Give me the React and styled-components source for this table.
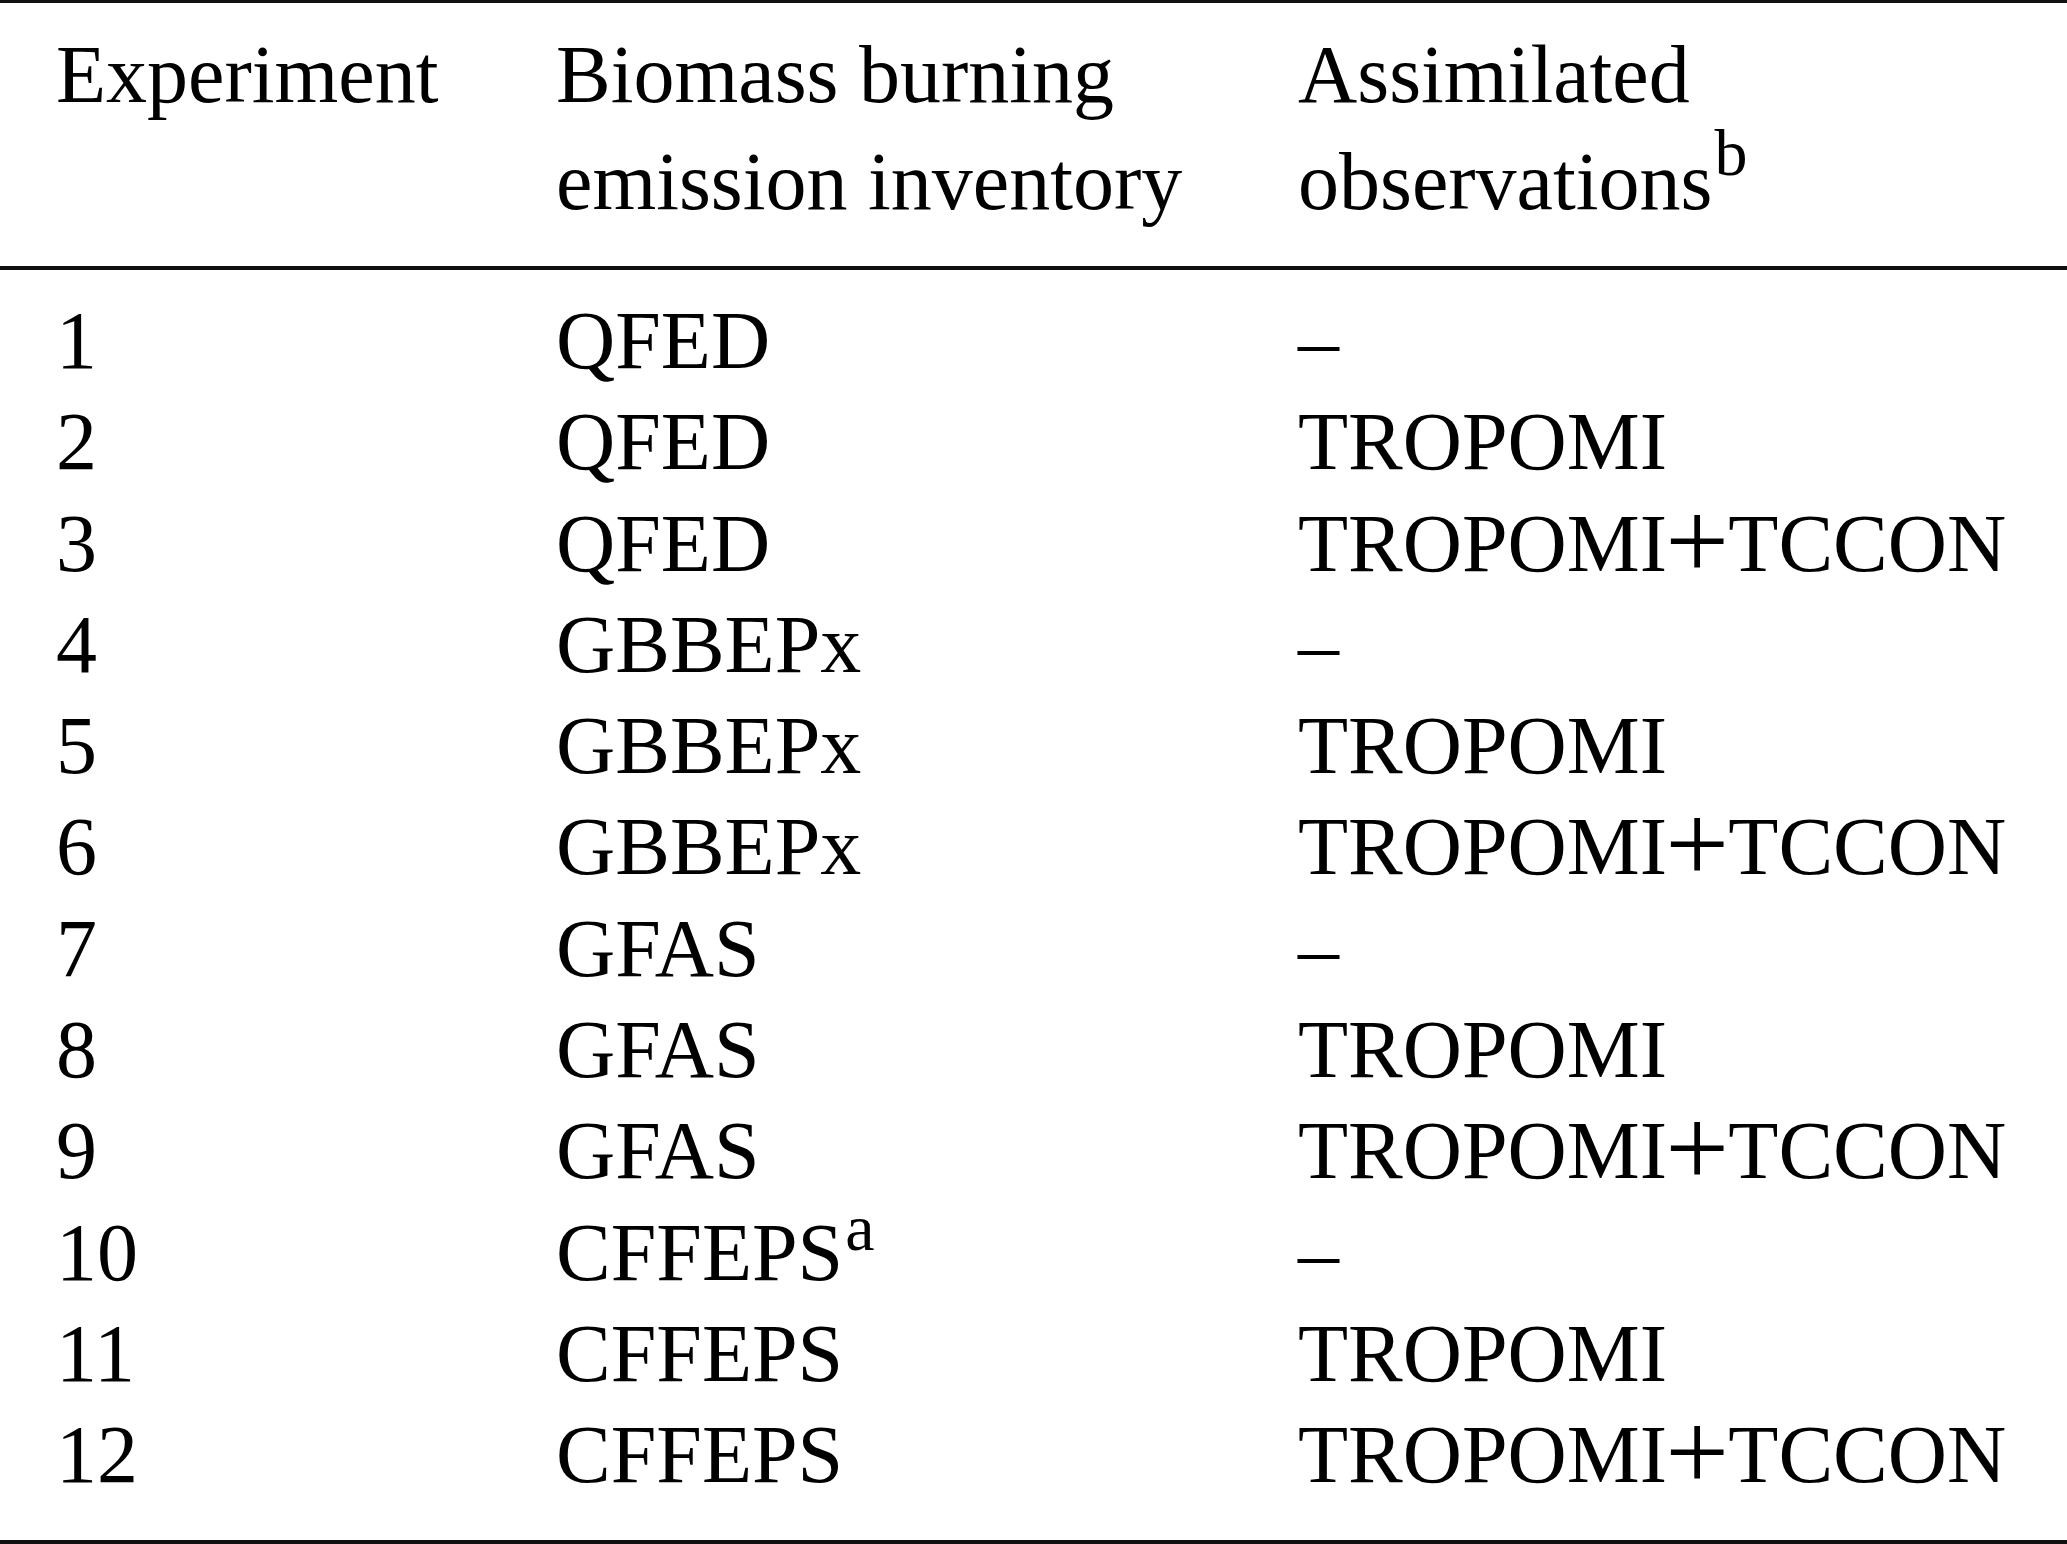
import React from "react";
import styled, { createGlobalStyle } from "styled-components";

const GlobalStyle = createGlobalStyle`
  html, body {
    margin: 0;
    padding: 0;
    background: #ffffff;
  }
  body {
    font-family: "Liberation Serif", "Times New Roman", serif;
    color: #000;
  }
`;

const Table = styled.div`
  width: 2067px;
  height: 1544px;
  box-sizing: border-box;
  border-top: 3px solid #111;
  border-bottom: 4px solid #111;
  display: flex;
  flex-direction: column;
`;

const Head = styled.div`
  display: grid;
  grid-template-columns: 500px 742px 1fr;
  padding: 18px 0 31px 56px;
  border-bottom: 4px solid #111;
  font-size: 82px;
  line-height: 107px;
`;

const Body = styled.div`
  display: grid;
  grid-template-columns: 500px 742px 1fr;
  grid-auto-rows: 101.3px;
  padding: 20px 0 0 56px;
  font-size: 82px;
  line-height: 101.3px;
`;

const Cell = styled.div`
  white-space: nowrap;
`;

const Sup = styled.sup`
  font-size: 66px;
  line-height: 0;
  vertical-align: ${(p) => (p.$high ? "34px" : "30px")};
  margin-left: 2px;
`;

const Plus = styled.span`
  display: inline-block;
  line-height: 82px;
  margin: 0 8px 0 7px;
  transform: scale(1.38);
  transform-origin: 50% 48px;
`;

const rows = [
  ["1", "QFED", "–"],
  ["2", "QFED", "TROPOMI"],
  ["3", "QFED", "TROPOMI+TCCON"],
  ["4", "GBBEPx", "–"],
  ["5", "GBBEPx", "TROPOMI"],
  ["6", "GBBEPx", "TROPOMI+TCCON"],
  ["7", "GFAS", "–"],
  ["8", "GFAS", "TROPOMI"],
  ["9", "GFAS", "TROPOMI+TCCON"],
  ["10", "CFFEPS", "–", "a"],
  ["11", "CFFEPS", "TROPOMI"],
  ["12", "CFFEPS", "TROPOMI+TCCON"],
];

function Obs({ text }) {
  const parts = text.split("+");
  if (parts.length === 1) return text;
  return (
    <>
      {parts[0]}
      <Plus>+</Plus>
      {parts[1]}
    </>
  );
}

export default function App() {
  return (
    <>
      <GlobalStyle />
      <Table>
        <Head>
          <Cell>Experiment</Cell>
          <Cell>
            Biomass burning
            <br />
            emission inventory
          </Cell>
          <Cell>
            Assimilated
            <br />
            observations<Sup $high>b</Sup>
          </Cell>
        </Head>
        <Body>
          {rows.map(([num, inv, obs, note]) => (
            <React.Fragment key={num}>
              <Cell>{num}</Cell>
              <Cell>
                {inv}
                {note && <Sup>{note}</Sup>}
              </Cell>
              <Cell>
                <Obs text={obs} />
              </Cell>
            </React.Fragment>
          ))}
        </Body>
      </Table>
    </>
  );
}
